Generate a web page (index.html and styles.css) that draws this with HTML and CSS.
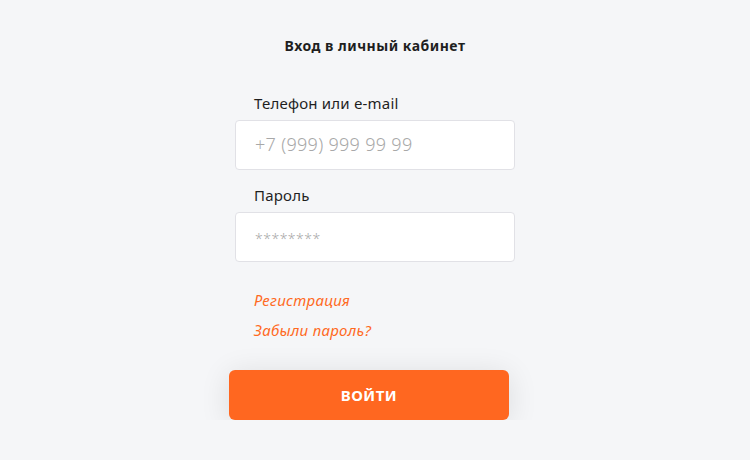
FILE: index.html
```html
<!DOCTYPE html>
<html lang="ru">
<head>
  <meta charset="UTF-8" />
  <meta name="viewport" content="width=device-width, initial-scale=1.0"/>
  <title>Вход в личный кабинет</title>
  <link rel="stylesheet" href="styles.css">
</head>
<body>
  <div class="login">
    <h2>Вход в личный кабинет</h2>

    <div class="field">
      <label for="login">Телефон или e-mail</label>
      <input type="text" id="login" placeholder="+7 (999) 999 99 99">
    </div>

    <div class="field">
      <label for="password">Пароль</label>
      <input type="text" id="password" class="pass" placeholder="********">
    </div>

    <div class="links">
      <a href="#">Регистрация</a>
      <a href="#">Забыли пароль?</a>
    </div>

    <button class="login-btn">ВОЙТИ</button>
  </div>
</body>
</html>
```

FILE: styles.css
```css
body {
  font-family: "Noto Sans", "DejaVu Sans", sans-serif;
  background-color: #f5f6f8;
  margin: 0;
  color: #1f1f1f;
}
.login {
  width: 280px;
  margin: 0 auto;
  padding-top: 36px;
  display: flex;
  flex-direction: column;
}
h2 {
  margin: 0 0 37px;
  text-align: center;
  font-size: 14px;
  font-weight: 700;
  line-height: 20px;
  letter-spacing: 0.5px;
}
.field {
  display: flex;
  flex-direction: column;
  margin-bottom: 15px;
}
.field label {
  padding-left: 19px;
  font-size: 15px;
  line-height: 20px;
  margin-bottom: 7px;
  letter-spacing: 0.2px;
}
.field input {
  box-sizing: border-box;
  height: 50px;
  border: 1px solid #e1e1e6;
  border-radius: 4px;
  background: white;
  padding: 0 19px 3px;
  font-family: inherit;
  font-size: 18px;
  font-weight: 300;
  letter-spacing: 0.3px;
  color: #1f1f1f;
  outline: none;
}
.field input::placeholder {
  color: #a8a8a8;
}
.field input.pass {
  padding-bottom: 0;
}
.field input.pass::placeholder {
  font-size: 14px;
  letter-spacing: 0.5px;
}
.links {
  display: flex;
  flex-direction: column;
  gap: 10px;
  padding-left: 19px;
  margin-top: 13px;
  margin-bottom: 30px;
}
.links a {
  color: #ff6a1f;
  font-style: italic;
  font-size: 15px;
  line-height: 20px;
  letter-spacing: 0.3px;
  text-decoration: none;
}
.login-btn {
  width: 280px;
  height: 50px;
  margin-left: -6px;
  border: none;
  border-radius: 6px;
  background-color: #ff6720;
  color: white;
  font-family: inherit;
  font-size: 15px;
  font-weight: 700;
  letter-spacing: 0.5px;
  box-shadow: 0 4px 30px rgba(0, 0, 0, 0.11);
  cursor: pointer;
}
```
